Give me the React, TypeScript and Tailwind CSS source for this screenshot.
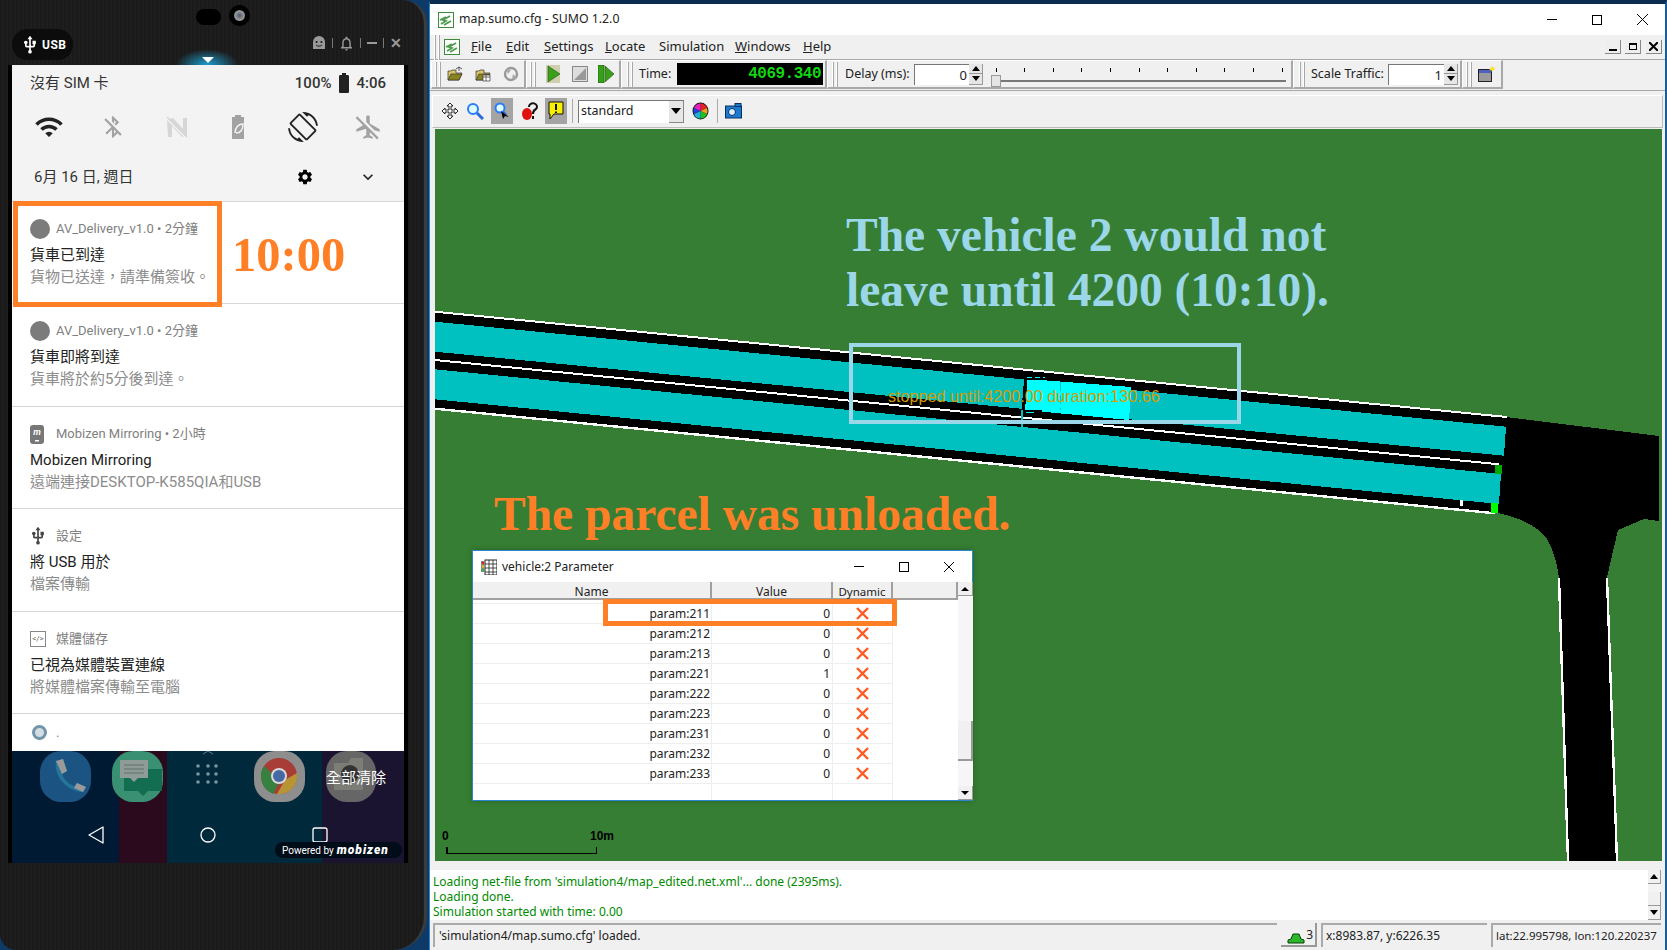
import type { ReactNode } from "react";
import {
  MdWifi,
  MdBluetoothDisabled,
  MdScreenRotation,
  MdAirplanemodeInactive,
  MdUsb,
  MdSettings,
  MdKeyboardArrowDown,
  MdBatteryFull,
  MdNotificationsNone,
} from "react-icons/md";

const PARAMS = [
  ["param:211", "0"],
  ["param:212", "0"],
  ["param:213", "0"],
  ["param:221", "1"],
  ["param:222", "0"],
  ["param:223", "0"],
  ["param:231", "0"],
  ["param:232", "0"],
  ["param:233", "0"],
];

const TICKS = [997, 1025, 1054, 1082, 1111, 1140, 1168, 1197, 1225, 1254, 1283];

function Dot() {
  return <div className="w-[20px] h-[20px] rounded-full bg-[#7b7b7b]" />;
}

function MobizenIcon() {
  return (
    <svg width="14" height="19" viewBox="0 0 14 19">
      <rect x="0" y="0" width="14" height="19" rx="3" fill="#777" />
      <text x="7" y="10" textAnchor="middle" fontSize="9" fontStyle="italic" fontWeight="700" fill="#fff">
        m
      </text>
      <rect x="5" y="15" width="4" height="1.5" fill="#fff" />
    </svg>
  );
}

function MediaIcon() {
  return (
    <div className="w-[16px] h-[16px] border border-[#888] flex items-center justify-center text-[8px] leading-none text-[#666]">
      &lt;/&gt;
    </div>
  );
}

function RingIcon() {
  return <div className="w-[15px] h-[15px] rounded-full border-[3px] border-[#7195ab] bg-[#d6dde2]" />;
}

function Notification({
  icon,
  label,
  title,
  body,
  height,
}: {
  icon: ReactNode;
  label: string;
  title: string;
  body: string;
  height: string;
}) {
  return (
    <div className={`${height} box-border border-b border-[#d6d6d6] bg-white pt-[18px] pl-[18px]`}>
      <div className="flex items-center h-[18px] text-[13px] text-[#808080]">
        <div className="w-[26px] flex items-center">{icon}</div>
        <span>{label}</span>
      </div>
      <div className="mt-[7px] h-[20px] leading-[20px] text-[15px] text-[#222]">{title}</div>
      <div className="mt-[2px] h-[20px] leading-[20px] text-[15px] text-[#8c8c8c]">{body}</div>
    </div>
  );
}

function BatterySaverIcon() {
  return (
    <svg width="26" height="26" viewBox="0 0 26 26">
      <path d="M10 1h6v2h3v22H7V3h3z" fill="#a2a2a2" />
      <path d="M10 19c0-6 4-9 8-9 0 6-3 9-7 9" fill="none" stroke="#f3f3f3" strokeWidth="1.5" />
    </svg>
  );
}

function NfcOffIcon() {
  return (
    <svg width="26" height="26" viewBox="0 0 26 26">
      <path d="M4 6l6-2 10 11V4h4v18l-5 1L9 12v11H5z" fill="#d6d6d6" />
      <path d="M3 4l20 20" stroke="#f3f3f3" strokeWidth="1.5" />
      <path d="M4 3l20 20" stroke="#d6d6d6" strokeWidth="1.5" />
    </svg>
  );
}

function GhostIcon() {
  return (
    <svg width="14" height="14" viewBox="0 0 14 14">
      <path d="M1 13V6a6 6 0 0112 0v7z" fill="#9a9a9a" />
      <circle cx="4.6" cy="6" r="1.1" fill="#1c1c1c" />
      <circle cx="9.4" cy="6" r="1.1" fill="#1c1c1c" />
      <path d="M4 9c2 1.6 4 1.6 6 0" stroke="#1c1c1c" fill="none" />
    </svg>
  );
}

function Dock() {
  return (
    <svg width="392" height="112" viewBox="0 0 392 112" className="block">
      <rect x="28" y="0" width="51" height="51" rx="21" fill="#1b5482" />
      <path d="M44 10l7-2 4 12-5 3c2 6 7 10 12 12l3-3 9 4-3 5c-14 0-30-15-27-31z" fill="#26749a" />
      <path d="M44 10l7-2 4 12-5 3z" fill="#9a9a9a" />
      <path d="M65 32l9 4-3 5-9-4z" fill="#9a9a9a" />
      <rect x="100" y="0" width="51" height="51" rx="21" fill="#3a9072" />
      <path d="M112 18h38v22h-14l-5 5-5-5h-14z" fill="#0f6a4e" opacity=".9" />
      <path d="M108 9h28v18h-10l-4 4-4-4h-10z" fill="#8f9b96" />
      <path d="M112 14h20M112 18h20M112 22h20" stroke="#5f7068" />
      <path d="M191 3l5-3 5 3" stroke="#5c7c88" fill="none" />
      {[186, 196, 204].map((x) =>
        [15, 23, 31].map((y) => <circle key={`${x}-${y}`} cx={x} cy={y} r="1.8" fill="#7d95a0" />)
      )}
      <rect x="242" y="0" width="51" height="51" rx="21" fill="#8e8e8e" />
      <circle cx="267" cy="25" r="18" fill="#a83c36" />
      <path d="M252 15a18 18 0 00-3 12 18 18 0 0012 16l7-13z" fill="#37803f" />
      <path d="M285 22a18 18 0 01-20 21l8-14z" fill="#b89434" />
      <circle cx="267" cy="25" r="8" fill="#d8d8d8" />
      <circle cx="267" cy="25" r="6" fill="#4668a4" />
      <rect x="314" y="0" width="50" height="51" rx="21" fill="#666" />
      <path d="M322 12h14l3-5h12v32h-29z" fill="#80807a" opacity=".9" />
      <circle cx="338" cy="23" r="9" fill="#333" />
      <path d="M77 84l14-8v16z" fill="none" stroke="#fff" strokeWidth="1.3" strokeLinejoin="round" />
      <circle cx="196" cy="84" r="7" fill="none" stroke="#fff" strokeWidth="1.3" />
      <rect x="301" y="77" width="14" height="14" rx="2" fill="none" stroke="#fff" strokeWidth="1.3" />
    </svg>
  );
}

function Phone() {
  return (
    <div className="w-[429px] h-full shrink-0 bg-[#0d3a66]">
      <div className="relative flex flex-col w-[427px] h-full rounded-tr-[24px] rounded-br-[34px] rounded-bl-[16px] border-r-[3px] border-[#3c3c3c] bg-[repeating-linear-gradient(90deg,#1a1a1a_0,#1a1a1a_2px,#1e1e1e_2px,#1e1e1e_4px)] font-['Roboto','Noto_Sans_CJK_TC',sans-serif]">
        <div className="relative flex items-start shrink-0 h-[65px] pt-[29px] pl-[12px] pr-[22px]">
          <div className="absolute left-[196px] top-[9px] w-[25px] h-[16px] rounded-full bg-black" />
          <div className="absolute left-[229px] top-[5px] w-[21px] h-[21px] rounded-full bg-black flex items-center justify-center">
            <div className="w-[11px] h-[11px] rounded-full bg-[radial-gradient(circle,#4a5a70_0,#9a9a9a_60%,#333_100%)]" />
          </div>
          <div className="absolute left-[175px] top-[49px] w-[64px] h-[16px] bg-[radial-gradient(ellipse_at_bottom,#1c9fd0_0,#0c4a6400_70%)]" />
          <div className="absolute left-[202px] top-[57px] w-0 h-0 border-x-[6px] border-x-transparent border-t-[6px] border-t-white" />
          <div className="flex items-center w-[61px] h-[31px] pl-[8px] rounded-full bg-[#0c0c0c] text-white text-[12px] font-bold">
            <MdUsb size={20} className="text-white" />
            <span className="ml-[2px] tracking-[0.5px]">USB</span>
          </div>
          <div className="ml-auto flex items-center gap-[5px] h-[28px] text-[#9a9a9a]">
            <GhostIcon />
            <div className="w-px h-[10px] bg-[#777] ml-[1px]" />
            <MdNotificationsNone size={17} />
            <div className="w-px h-[10px] bg-[#777]" />
            <div className="w-[10px] h-[2px] bg-[#9a9a9a] ml-[1px]" />
            <div className="w-px h-[10px] bg-[#777] ml-[1px]" />
            <span className="text-[14px] leading-none font-bold ml-[1px]">✕</span>
          </div>
        </div>

        <div className="flex flex-col w-[400px] h-[798px] ml-[8px] px-[4px] bg-black shrink-0">
          <div className="shrink-0 box-border h-[137px] bg-[#f3f3f3] border-b border-[#dcdcdc]">
            <div className="flex items-center h-[36px] pl-[18px] pr-[18px] text-[15px] text-[#333]">
              <span>沒有 SIM 卡</span>
              <div className="ml-auto flex items-center">
                <span className="font-medium">100%</span>
                <MdBatteryFull size={24} className="text-[#222] mx-[0.5px]" />
                <span className="font-medium">4:06</span>
              </div>
            </div>
            <div className="flex items-center justify-between h-[52px] px-[22px]">
              <MdWifi size={30} className="text-[#222]" />
              <MdBluetoothDisabled size={26} className="text-[#a2a2a2]" />
              <NfcOffIcon />
              <BatterySaverIcon />
              <MdScreenRotation size={30} className="text-[#222]" />
              <MdAirplanemodeInactive size={28} className="text-[#a2a2a2]" />
            </div>
            <div className="flex items-center h-[48px] pl-[22px] pr-[26px] text-[15px] text-[#333]">
              <span>6月 16 日, 週日</span>
              <div className="ml-auto flex items-center gap-[44px]">
                <MdSettings size={18} className="text-black" />
                <MdKeyboardArrowDown size={20} className="text-[#222]" />
              </div>
            </div>
          </div>

          <div className="relative shrink-0">
            <Notification height="h-[102px]" icon={<Dot />} label="AV_Delivery_v1.0 • 2分鐘" title="貨車已到達" body="貨物已送達，請準備簽收。" />
            <Notification height="h-[103px]" icon={<Dot />} label="AV_Delivery_v1.0 • 2分鐘" title="貨車即將到達" body="貨車將於約5分後到達。" />
            <Notification height="h-[102px]" icon={<MobizenIcon />} label="Mobizen Mirroring • 2小時" title="Mobizen Mirroring" body="遠端連接DESKTOP-K585QIA和USB" />
            <Notification height="h-[103px]" icon={<MdUsb size={20} className="text-[#444] -ml-[2px]" />} label="設定" title="將 USB 用於" body="檔案傳輸" />
            <Notification height="h-[102px]" icon={<MediaIcon />} label="媒體儲存" title="已視為媒體裝置連線" body="將媒體檔案傳輸至電腦" />
            <div className="flex items-center h-[37px] pl-[20px] bg-white text-[13px] text-[#808080]">
              <div className="w-[24px]">
                <RingIcon />
              </div>
              <span>.</span>
            </div>
            <div className="absolute left-[1px] -top-[1px] w-[209px] h-[106px] border-[5px] border-[#ff7f27]" />
            <div className="absolute left-[220px] top-[23px] font-['Liberation_Serif',serif] font-bold text-[48.5px] leading-[60px] text-[#ff7f27]">
              10:00
            </div>
          </div>

          <div className="relative grow bg-[linear-gradient(90deg,#001a33_0,#001a33_107px,#2c0a1e_107px,#2c0a1e_155px,#00293b_155px,#00293b_310px,#1a1430_310px,#1a1430_100%)]">
            <Dock />
            <span className="absolute left-[314px] top-[16px] text-[15px] leading-[22px] text-white">全部清除</span>
            <div className="absolute right-[2px] top-[91px] flex items-center gap-[3px] w-[127px] h-[16px] pl-[7px] rounded-full bg-[#000c18] text-[10px] text-white whitespace-nowrap">
              <span>Powered by</span>
              <span className="italic font-black text-[12px] tracking-[1px]">mobizen</span>
            </div>
          </div>
        </div>
      </div>
    </div>
  );
}

function SumoLogo() {
  return (
    <svg width="16" height="16" viewBox="0 0 16 16" className="shrink-0">
      <rect x="0.5" y="0.5" width="15" height="15" fill="#fff" stroke="#3a8a3a" />
      <path d="M3 12l5-3-3-1 7-4M2 8l6-3M6 13l7-4" stroke="#4f9c4f" strokeWidth="1.8" fill="none" />
    </svg>
  );
}

function Grip({ margin = "mx-[3px]" }: { margin?: string }) {
  return (
    <div className={`flex gap-[2px] h-[25px] shrink-0 ${margin}`}>
      <div className="w-[2px] border-l border-r border-l-white border-r-[#a8a8a8] bg-[#e8e8e8]" />
      <div className="w-[2px] border-l border-r border-l-white border-r-[#a8a8a8] bg-[#e8e8e8]" />
    </div>
  );
}

function ToolGroup({ width, children }: { width: string; children: ReactNode }) {
  return (
    <div className={`${width} relative flex items-center h-[29px] shrink-0 border-t border-l border-t-white border-l-white border-b-2 border-r-2 border-b-[#a8a8a8] border-r-[#a8a8a8]`}>
      {children}
    </div>
  );
}

function FolderIcon({ extra }: { extra?: boolean }) {
  return (
    <svg width="16" height="16" viewBox="0 0 16 16">
      <path d="M1 14V5h3l1-1h4v3h6l-3 7z" fill="#d8c468" stroke="#333" strokeWidth=".7" />
      <path d="M1 14l3-6h11l-3 6z" fill="#8a8420" stroke="#333" strokeWidth=".7" />
      {extra ? (
        <path d="M8 9h7v6H8z M8 11h7M11 9v6" fill="#fff" stroke="#333" strokeWidth=".7" />
      ) : (
        <path d="M9 3l3-2 3 2M12 1v4" stroke="#333" fill="none" strokeWidth=".8" />
      )}
    </svg>
  );
}

function ReloadIcon() {
  return (
    <svg width="16" height="16" viewBox="0 0 16 16">
      <circle cx="8" cy="8" r="6" fill="none" stroke="#999" strokeWidth="2.4" />
      <path d="M3 3l5 1-3 4zM10 8l4 4-5 1z" fill="#aaa" />
    </svg>
  );
}

function Spin() {
  return (
    <div className="flex flex-col w-[14px] h-[21px] shrink-0 bg-[#e6e6e6] border-b border-r border-[#999]">
      <div className="flex-1 flex items-center justify-center border-b border-[#999]">
        <div className="w-0 h-0 border-x-[4px] border-x-transparent border-b-[5px] border-b-black" />
      </div>
      <div className="flex-1 flex items-center justify-center">
        <div className="w-0 h-0 border-x-[4px] border-x-transparent border-t-[5px] border-t-black" />
      </div>
    </div>
  );
}

function NumberBox({ width, value }: { width: string; value: string }) {
  return (
    <div className={`${width} h-[21px] shrink-0 bg-white border-t border-l border-[#777] text-right pr-[2px] leading-[20px] text-[13px] text-[#222]`}>
      {value}
    </div>
  );
}

function Toolbar() {
  return (
    <div className="flex items-start h-[31px] shrink-0 pl-[1px] border-b border-[#a8a8a8] text-[12.5px] text-[#222]">
      <ToolGroup width="w-[95px]">
        <Grip />
        <div className="ml-[3px] flex gap-[12px]">
          <FolderIcon />
          <FolderIcon extra />
          <ReloadIcon />
        </div>
      </ToolGroup>
      <ToolGroup width="w-[95px]">
        <Grip />
        <div className="ml-[7px] flex items-center gap-[10px]">
          <svg width="16" height="18" viewBox="0 0 16 18">
            <rect x="0" y="0" width="14" height="18" fill="#cfcfb0" />
            <path d="M2 1l12 8-12 8z" fill="#3aa01a" stroke="#205010" strokeWidth=".6" />
          </svg>
          <svg width="16" height="16" viewBox="0 0 16 16">
            <rect x="0.5" y="0.5" width="15" height="15" fill="#ddd" stroke="#888" />
            <path d="M2 14L14 2v12z" fill="#999" />
          </svg>
          <svg width="16" height="18" viewBox="0 0 16 18">
            <rect x="0" y="0" width="6" height="18" fill="#35a018" stroke="#205010" strokeWidth=".6" />
            <path d="M7 1l9 8-9 8z" fill="#3aa01a" stroke="#205010" strokeWidth=".6" />
          </svg>
        </div>
      </ToolGroup>
      <ToolGroup width="w-[206px]">
        <Grip margin="ml-[5px] mr-[6px]" />
        <span className="w-[38px]">Time:</span>
        <div className="w-[146px] h-[22px] bg-black text-right pr-[2px] font-['Liberation_Mono',monospace] font-bold text-[16px] leading-[22px] text-[#12d612] tracking-[-0.5px]">
          4069.340
        </div>
      </ToolGroup>
      <ToolGroup width="w-[466px]">
        <Grip margin="ml-[4px] mr-[7px]" />
        <span className="w-[69px] whitespace-nowrap">Delay (ms):</span>
        <NumberBox width="w-[55px]" value="0" />
        <Spin />
        <div className="relative grow h-full">
          <div className="absolute left-[8px] right-[5px] top-[19px] h-[2px] bg-[#777]" />
          {TICKS.map((x) => (
            <div key={x} className="absolute top-[7px] w-px h-[4px] bg-black" style={{ left: x - 984 }} />
          ))}
          <div className="absolute left-[8px] top-[14px] w-[10px] h-[12px] bg-[#e4e4e4] border border-[#999]" />
        </div>
      </ToolGroup>
      <ToolGroup width="w-[169px]">
        <Grip margin="ml-[5px] mr-[6px]" />
        <span className="w-[77px] whitespace-nowrap">Scale Traffic:</span>
        <NumberBox width="w-[56px]" value="1" />
        <Spin />
      </ToolGroup>
      <ToolGroup width="w-[41px]">
        <Grip margin="ml-[3px] mr-[6px]" />
        <svg width="17" height="16" viewBox="0 0 17 16">
          <rect x="0.5" y="3.5" width="13" height="12" fill="#9a9a9a" stroke="#222" />
          <rect x="1" y="4" width="12" height="3" fill="#5060c0" />
          <path d="M14 0l1 2 2-1-1 2 1 1-2 0-1 2-1-2-2 0 2-2z" fill="#f6e020" />
        </svg>
      </ToolGroup>
    </div>
  );
}

function ViewBar() {
  return (
    <div className="flex items-center h-[33px] shrink-0 mt-[4px] mb-[1px] pb-[1px] mx-[2px] pl-[8px] border-t border-l border-b border-r border-t-white border-l-white border-b-[#bbb] border-r-[#bbb]">
      <svg width="18" height="18" viewBox="0 0 18 18" className="mr-[7px]">
        <path d="M9 1l3 3h-2v4h4V6l3 3-3 3v-2h-4v4h2l-3 3-3-3h2v-4H4v2L1 9l3-3v2h4V4H6z" fill="#fff" stroke="#111" strokeWidth=".9" />
      </svg>
      <svg width="18" height="18" viewBox="0 0 18 18" className="mr-[7px]">
        <circle cx="7" cy="7" r="5" fill="#dff" stroke="#2a7cff" strokeWidth="2" />
        <path d="M11 11l6 6" stroke="#2a6ae0" strokeWidth="3" />
      </svg>
      <div className="flex items-center justify-center w-[22px] h-[26px] bg-[#a4a4a4]">
        <svg width="18" height="18" viewBox="0 0 18 18">
          <circle cx="7" cy="6" r="4.5" fill="#dff" stroke="#2a7cff" strokeWidth="2" />
          <path d="M10 10l3 3" stroke="#2a6ae0" strokeWidth="2.5" />
          <path d="M8 9l2 8 2-3 4 1z" fill="#000" />
        </svg>
      </div>
      <svg width="18" height="20" viewBox="0 0 18 20" className="ml-[8px] mr-[6px]">
        <ellipse cx="6" cy="13" rx="5" ry="6" fill="#e01010" />
        <path d="M8 6a4 3.5 0 117 2c-2 1-3 2-3 5M12 15v3" stroke="#111" strokeWidth="2" fill="none" />
      </svg>
      <div className="flex items-center justify-center w-[22px] h-[26px] bg-[#a4a4a4]">
        <svg width="18" height="20" viewBox="0 0 18 20">
          <path d="M2 1h14v12H7l-4 5v-5H2z" fill="#f6f000" stroke="#111" />
          <path d="M9 3v6M9 10.5v1.5" stroke="#111" strokeWidth="2" />
        </svg>
      </div>
      <div className="w-px h-[24px] bg-[#aaa] ml-[5px] mr-[5px]" />
      <div className="flex items-center w-[106px] h-[23px] bg-white border-t border-l border-[#777] text-[12.5px] text-[#222] pl-[2px]">
        <span className="grow">standard</span>
        <div className="flex items-center justify-center w-[15px] h-full bg-[#e6e6e6] border-b border-r border-[#888]">
          <div className="w-0 h-0 border-x-[5px] border-x-transparent border-t-[6px] border-t-black" />
        </div>
      </div>
      <svg width="17" height="18" viewBox="0 0 17 18" className="ml-[8px]">
        <ellipse cx="8.5" cy="9" rx="8" ry="8.5" fill="#1a1a1a" />
        <path d="M8.5 9V1.5A7 7.5 0 0115 6z" fill="#e82020" />
        <path d="M8.5 9L15 6a7 7.5 0 010 6z" fill="#f0a020" />
        <path d="M8.5 9L15 12a7 7.5 0 01-6.5 4.5z" fill="#20c020" />
        <path d="M8.5 9v7.5A7 7.5 0 012 12z" fill="#20b0d0" />
        <path d="M8.5 9L2 12a7 7.5 0 010-6z" fill="#2040e0" />
        <path d="M8.5 9L2 6a7 7.5 0 016.5-4.5z" fill="#e020c0" />
      </svg>
      <div className="w-px h-[24px] bg-[#aaa] ml-[8px] mr-[7px]" />
      <svg width="17" height="16" viewBox="0 0 17 16">
        <rect x="0.5" y="3" width="16" height="12" fill="#1a7ad0" stroke="#0a3060" />
        <rect x="10" y="0.5" width="6" height="3" fill="#1a7ad0" stroke="#0a3060" />
        <circle cx="7" cy="9" r="3.5" fill="#d8f0ff" stroke="#0a3060" />
      </svg>
    </div>
  );
}

function RoadCanvas() {
  return (
    <svg viewBox="435 129 1225 732" width="1225" height="732" className="absolute inset-0" shapeRendering="crispEdges">
      <path
        d="M435 311 L1506 417 L1659 436 L1659 521 L1644 519 L1618 530 L1607 577 L1617 861 L1568 861 L1559 578 Q1555 550 1545 536 Q1530 520 1498 513 L435 409 Z"
        fill="#000"
      />
      <path d="M435 321.7 L1506 426.7 L1504 455.7 L435 351.7 Z" fill="#00c0c0" />
      <path d="M435 369.3 L1501 474 L1499 504 L435 399.3 Z" fill="#00c0c0" />
      <path d="M435 311.7 L1506.7 417" stroke="#fff" strokeWidth="2" />
      <path d="M435 360 L1499 464.3" stroke="#fff" strokeWidth="2" />
      <path d="M435 408.7 L1495 513.3" stroke="#fff" strokeWidth="2.4" />
      <path d="M1461.5 500V506" stroke="#fff" strokeWidth="2.5" />
      <path d="M1559 578 L1568 861" stroke="#fff" strokeWidth="2.4" />
      <path d="M1607 578 L1617 861" stroke="#fff" strokeWidth="2.4" />
      <rect x="1495" y="465" width="7" height="9" fill="#00a800" />
      <rect x="1491" y="503" width="7" height="10" fill="#00ff00" />
      <path d="M1027 379 L1131.5 387 L1129 420 L1025 410 Z" fill="#00ffff" />
      <path d="M1026 377 L1023 413" stroke="#000" strokeWidth="3.5" />
      <path d="M1026 378 H1045 M1025 411 H1042" stroke="#000" strokeWidth="3" />
      <path d="M1027 377 H1045" stroke="#00ffff" strokeDasharray="5 3" />
      <path d="M1026 412 H1034" stroke="#00ffff" />
      <path d="M1022 410 V428" stroke="#00c0c0" strokeWidth="2" />
      <path d="M1060 382 V410" stroke="#00c0c0" strokeDasharray="9 4" />
      <path d="M447 847 V853.5 H596.5 V847" fill="none" stroke="#000" strokeWidth="1.2" />
    </svg>
  );
}

function ParamDialog() {
  return (
    <div className="absolute left-[37px] top-[421px] flex flex-col w-[501px] h-[251px] bg-white border border-[#2a86cc] shadow-[0_0_6px_rgba(0,0,0,0.25)] font-['Noto_Sans',sans-serif] text-[12px] text-[#222]">
      <div className="flex items-center h-[31px] shrink-0 pl-[8px]">
        <svg width="16" height="16" viewBox="0 0 16 16" className="shrink-0">
          <rect x="4" y="1" width="12" height="15" fill="#fff" stroke="#222" />
          <path d="M4 5h12M4 9h12M4 13h12M8 1v15M12 1v15" stroke="#222" strokeWidth=".8" />
          <rect x="0" y="2" width="4" height="11" fill="#888" />
          <circle cx="2" cy="4" r="1.3" fill="#e02020" />
          <circle cx="2" cy="7.5" r="1.3" fill="#e0c020" />
          <circle cx="2" cy="11" r="1.3" fill="#20c020" />
        </svg>
        <span className="ml-[5px]">vehicle:2 Parameter</span>
        <div className="ml-auto flex items-center text-black">
          <div className="w-[10px] h-px bg-black mr-[35px]" />
          <div className="w-[10px] h-[10px] border border-black mr-[35px]" />
          <svg width="10" height="10" viewBox="0 0 10 10" className="mr-[18px]">
            <path d="M0 0l10 10M10 0L0 10" stroke="#000" />
          </svg>
        </div>
      </div>
      <div className="flex grow min-h-0">
        <div className="w-[485px] shrink-0 flex flex-col">
          <div className="flex h-[18px] shrink-0 bg-[#f0f0f0] border-b-2 border-[#a0a0a0] leading-[19px] text-center">
            <div className="w-[239px] border-r-2 border-[#a0a0a0]">Name</div>
            <div className="w-[121px] border-r-2 border-[#a0a0a0]">Value</div>
            <div className="w-[60px] border-r-2 border-[#a0a0a0] text-[11.5px]">Dynamic</div>
            <div className="w-[65px] border-r-2 border-[#a0a0a0]" />
          </div>
          <div className="h-[4px] shrink-0 w-[420px] border-b border-[#eee]" />
          {PARAMS.map(([name, value]) => (
            <div key={name} className="flex h-[20px] shrink-0 w-[420px] border-b border-[#eee] leading-[19px]">
              <div className="w-[239px] pr-[1px] text-right border-r border-[#eee]">{name}</div>
              <div className="w-[121px] pr-[2px] text-right border-r border-[#eee]">{value}</div>
              <div className="w-[60px] flex items-center justify-center border-r border-[#eee]">
                <svg width="13" height="13" viewBox="0 0 13 13">
                  <path d="M1 1l11 11M12 1L1 12" stroke="#ff5a24" strokeWidth="2.4" />
                </svg>
              </div>
            </div>
          ))}
          <div className="flex grow w-[420px]">
            <div className="w-[239px] border-r border-[#eee]" />
            <div className="w-[121px] border-r border-[#eee]" />
            <div className="w-[60px] border-r border-[#eee]" />
          </div>
        </div>
        <div className="flex flex-col w-[15px] shrink-0 bg-[#f6f6f6]">
          <div className="flex items-center justify-center h-[14px] bg-[#f0f0f0] border-b border-r border-[#999]">
            <div className="w-0 h-0 border-x-[4px] border-x-transparent border-b-[4px] border-b-black" />
          </div>
          <div className="h-[125px]" />
          <div className="h-[40px] bg-[#f0f0f0] border-b-2 border-r-2 border-[#999]" />
          <div className="grow" />
          <div className="flex items-center justify-center h-[14px] bg-[#f0f0f0] border-b border-r border-[#999]">
            <div className="w-0 h-0 border-x-[4px] border-x-transparent border-t-[4px] border-t-black" />
          </div>
        </div>
      </div>
      <div className="absolute left-[130px] top-[48px] w-[294px] h-[27px] border-[5px] border-[#ff7f27]" />
    </div>
  );
}

function SumoWindow() {
  return (
    <div className="flex flex-col grow min-w-0 h-full border-l border-t-[4px] border-r-[2px] border-l-[#2a86cc] border-t-[#0a2c4e] border-r-[#1c5a9e] bg-[#f0f0f0] font-['Noto_Sans',sans-serif]">
      <div className="flex items-center h-[31px] shrink-0 pl-[8px] bg-white">
        <SumoLogo />
        <span className="ml-[5px] text-[12.3px] text-[#222]">map.sumo.cfg - SUMO 1.2.0</span>
        <div className="ml-auto flex items-center">
          <div className="w-[10px] h-px bg-black mr-[35px]" />
          <div className="w-[10px] h-[10px] border border-black mr-[35px]" />
          <svg width="11" height="11" viewBox="0 0 11 11" className="mr-[17px]">
            <path d="M0 0l11 11M11 0L0 11" stroke="#000" />
          </svg>
        </div>
      </div>

      <div className="flex items-center h-[25px] shrink-0 pl-[3px] text-[13px] text-[#222] border-b border-[#a8a8a8]">
        <Grip margin="ml-[1px] mr-[4px]" />
        <SumoLogo />
        <div className="flex ml-[11px]">
          <span className="w-[35px]"><u>F</u>ile</span>
          <span className="w-[38px]"><u>E</u>dit</span>
          <span className="w-[61px]"><u>S</u>ettings</span>
          <span className="w-[54px]"><u>L</u>ocate</span>
          <span className="w-[76px]">Simulation</span>
          <span className="w-[68px]"><u>W</u>indows</span>
          <span><u>H</u>elp</span>
        </div>
        <div className="ml-auto flex items-center gap-[4px] pr-[3px]">
          <div className="flex items-end justify-center w-[16px] h-[14px] pb-[2px] border-b border-r border-[#888] bg-[#eee]">
            <div className="w-[8px] h-[2px] bg-black" />
          </div>
          <div className="flex items-center justify-center w-[16px] h-[14px] border-b border-r border-[#888] bg-[#eee]">
            <div className="w-[8px] h-[7px] border border-black border-t-2" />
          </div>
          <div className="flex items-center justify-center w-[16px] h-[14px] ml-[1px] border-b border-r border-[#888] bg-[#eee]">
            <svg width="9" height="9" viewBox="0 0 9 9">
              <path d="M0 0l9 9M9 0L0 9" stroke="#000" strokeWidth="2" />
            </svg>
          </div>
        </div>
      </div>

      <Toolbar />
      <ViewBar />

      <div className="relative h-[732px] shrink-0 ml-[5px] mr-[3px] bg-[#367e34] font-['Liberation_Sans',sans-serif] overflow-hidden">
        <RoadCanvas />
        <div className="absolute left-[411px] top-[79px] font-['Liberation_Serif',serif] font-bold text-[47.5px] leading-[55px] text-[#9bd7e8] whitespace-nowrap">
          <div>The vehicle 2 would not</div>
          <div>leave until 4200 (10:10).</div>
        </div>
        <div className="absolute left-[414px] top-[214px] w-[392px] h-[81px] border-[4px] border-[#9bd7e8]" />
        <div className="absolute left-[453px] top-[258px] text-[16.2px] leading-[18px] text-[#d89c00] whitespace-nowrap">
          stopped until:4200.00 duration:130.66
        </div>
        <div className="absolute left-[59px] top-[352px] font-['Liberation_Serif',serif] font-bold text-[47.5px] leading-[66px] text-[#ff7f27] whitespace-nowrap">
          The parcel was unloaded.
        </div>
        <ParamDialog />
        <div className="absolute left-[7px] top-[700px] text-[12px] font-bold leading-[14px] text-black">0</div>
        <div className="absolute left-[155px] top-[700px] text-[12px] font-bold leading-[14px] text-black">10m</div>
      </div>

      <div className="flex h-[50px] shrink-0 mt-[9px] mr-[4px]">
        <div className="grow bg-white pl-[3px] pt-[4px] text-[12px] leading-[15px] text-[#008a00]">
          <div>Loading net-file from 'simulation4/map_edited.net.xml'... done (2395ms).</div>
          <div>Loading done.</div>
          <div>Simulation started with time: 0.00</div>
        </div>
        <div className="flex flex-col w-[13px] shrink-0 bg-[#f4f4f4]">
          <div className="flex items-center justify-center h-[14px] bg-[#f0f0f0] border-b border-r border-[#999]">
            <div className="w-0 h-0 border-x-[4px] border-x-transparent border-b-[5px] border-b-black" />
          </div>
          <div className="h-[8px]" />
          <div className="h-[14px] bg-[#f0f0f0] border-b border-r border-[#999]" />
          <div className="flex items-center justify-center grow bg-[#f0f0f0] border-b border-r border-[#999]">
            <div className="w-0 h-0 border-x-[4px] border-x-transparent border-t-[5px] border-t-black" />
          </div>
        </div>
      </div>

      <div className="flex gap-[4px] h-[24px] shrink-0 mt-[3px] ml-[3px] mr-[4px] text-[12px] text-[#222] leading-[22px]">
        <div className="w-[844px] shrink-0 pl-[4px] border-t-2 border-l-2 border-[#aaa]">'simulation4/map.sumo.cfg' loaded.</div>
        <div className="flex items-end justify-end w-[36px] shrink-0 pr-[2px] border-b-2 border-r-2 border-[#999] bg-[#f0f0f0]">
          <svg width="18" height="12" viewBox="0 0 18 12" className="mb-[1px]">
            <path d="M1 11V8l3-1 2-5h6l2 5 3 1v3z" fill="#2cb82c" stroke="#0a400a" />
          </svg>
          <span className="ml-[1px] -mb-[1px]">3</span>
        </div>
        <div className="w-[166px] shrink-0 pl-[3px] border-t-2 border-l-2 border-[#aaa]">x:8983.87, y:6226.35</div>
        <div className="grow min-w-0 whitespace-nowrap pl-[3px] border-t-2 border-l-2 border-[#aaa] text-[11.5px]">lat:22.995798, lon:120.220237</div>
      </div>
    </div>
  );
}

export default function App() {
  return (
    <div className="flex w-[1667px] h-[950px] overflow-hidden bg-[#0d3a66]">
      <Phone />
      <SumoWindow />
    </div>
  );
}
